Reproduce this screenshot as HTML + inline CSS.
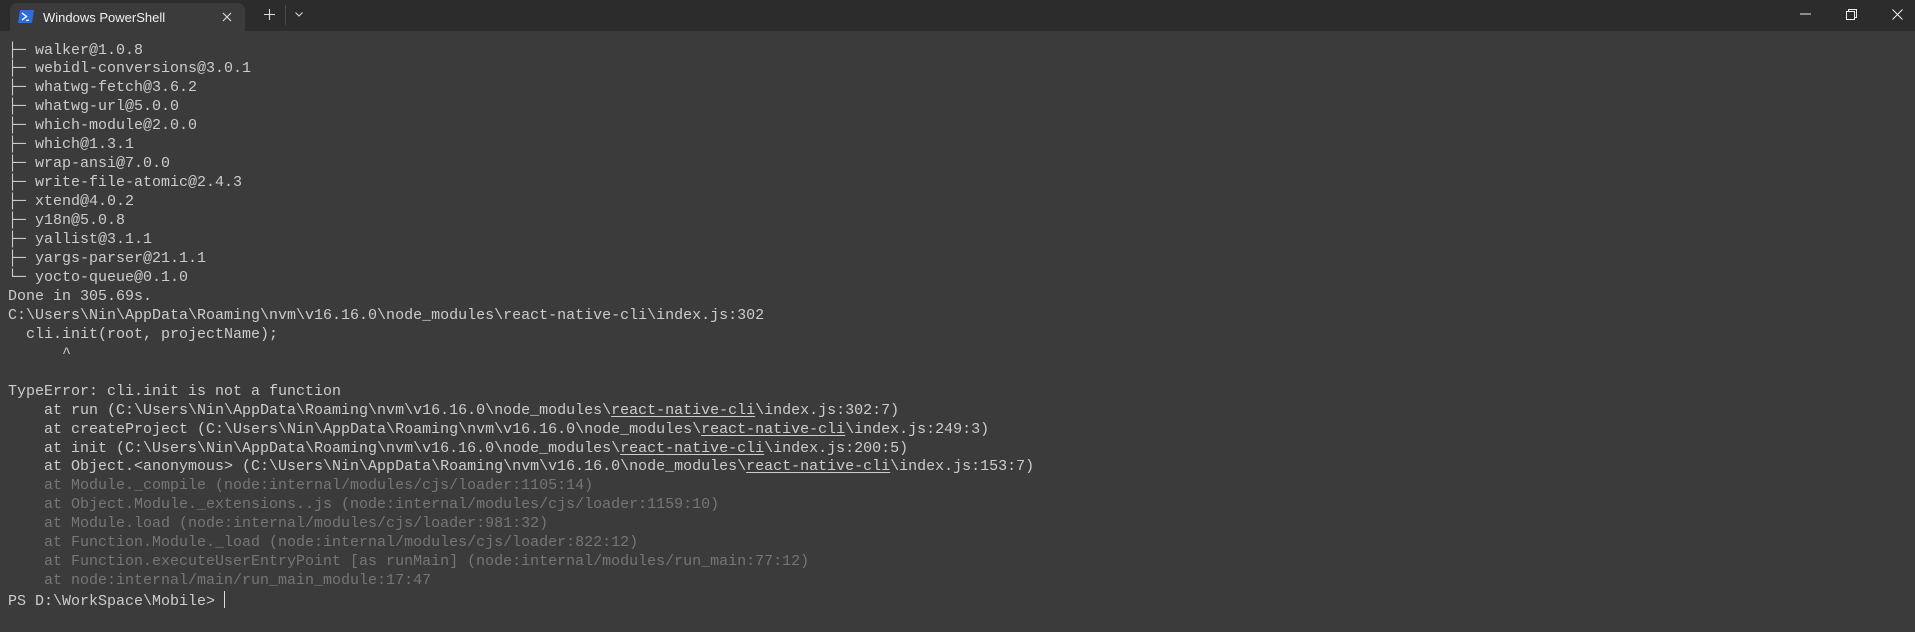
<!DOCTYPE html>
<html><head><meta charset="utf-8"><style>
*{margin:0;padding:0;box-sizing:border-box}
body{width:1915px;height:632px;background:#3b3b3b;overflow:hidden;position:relative;font-family:"Liberation Sans",sans-serif}
.bar{position:absolute;left:0;top:0;width:1915px;height:31px;background:#2c2c2c}
.tab{position:absolute;left:10px;top:3px;width:235px;height:28px;background:#3b3b3b;border-radius:7px 7px 0 0}
.title{position:absolute;left:33px;top:7px;font-size:13px;color:#f0f0f0}
.term{position:absolute;left:8px;top:41.5px;font-family:"Liberation Mono",monospace;font-size:15px;line-height:18.95px;color:#cccccc;white-space:pre}
.d{color:#767676}
u{text-decoration:underline;text-underline-offset:2px}
.cur{display:inline-block;width:1px;height:17px;background:#ddd;vertical-align:-3px}
</style></head><body>
<div class="bar">
<div class="tab">
<svg style="position:absolute;left:8px;top:7px" width="16" height="13" viewBox="0 0 16 13"><path d="M2 0H16L14 13H0Z" fill="#2f6ed8"/><path d="M4 3L8.5 6.5L4 10" stroke="#fff" stroke-width="1.4" fill="none"/><path d="M8 10.3H11" stroke="#fff" stroke-width="1.2"/></svg>
<div class="title">Windows PowerShell</div>
<svg style="position:absolute;left:212px;top:9px" width="10" height="10" viewBox="0 0 10 10"><path d="M1 1L9 9M9 1L1 9" stroke="#ddd" stroke-width="1.1"/></svg>
</div>
<svg style="position:absolute;left:264px;top:9px" width="11" height="11" viewBox="0 0 11 11"><path d="M5.5 0V11M0 5.5H11" stroke="#ddd" stroke-width="1.1"/></svg>
<div style="position:absolute;left:285px;top:5px;width:1px;height:20px;background:#4a4a4a"></div>
<svg style="position:absolute;left:295px;top:12px" width="8" height="5" viewBox="0 0 8 5"><path d="M0.5 0.5L4 4L7.5 0.5" stroke="#ddd" stroke-width="1" fill="none"/></svg>
<svg style="position:absolute;left:1800px;top:13px" width="11" height="2"><path d="M0 1H11" stroke="#eee" stroke-width="1"/></svg>
<svg style="position:absolute;left:1846px;top:9px" width="11" height="11" viewBox="0 0 11 11"><rect x="0.5" y="2.5" width="8" height="8" stroke="#eee" fill="none"/><path d="M2.5 2.5V0.5H10.5V8.5H8.5" stroke="#eee" fill="none"/></svg>
<svg style="position:absolute;left:1892px;top:9px" width="11" height="11" viewBox="0 0 11 11"><path d="M0.5 0.5L10.5 10.5M10.5 0.5L0.5 10.5" stroke="#eee" stroke-width="1"/></svg>
</div>
<div class="term">├─ walker@1.0.8
├─ webidl-conversions@3.0.1
├─ whatwg-fetch@3.6.2
├─ whatwg-url@5.0.0
├─ which-module@2.0.0
├─ which@1.3.1
├─ wrap-ansi@7.0.0
├─ write-file-atomic@2.4.3
├─ xtend@4.0.2
├─ y18n@5.0.8
├─ yallist@3.1.1
├─ yargs-parser@21.1.1
└─ yocto-queue@0.1.0
Done in 305.69s.
C:\Users\Nin\AppData\Roaming\nvm\v16.16.0\node_modules\react-native-cli\index.js:302
  cli.init(root, projectName);
      ^

TypeError: cli.init is not a function
    at run (C:\Users\Nin\AppData\Roaming\nvm\v16.16.0\node_modules\<u>react-native-cli</u>\index.js:302:7)
    at createProject (C:\Users\Nin\AppData\Roaming\nvm\v16.16.0\node_modules\<u>react-native-cli</u>\index.js:249:3)
    at init (C:\Users\Nin\AppData\Roaming\nvm\v16.16.0\node_modules\<u>react-native-cli</u>\index.js:200:5)
    at Object.&lt;anonymous&gt; (C:\Users\Nin\AppData\Roaming\nvm\v16.16.0\node_modules\<u>react-native-cli</u>\index.js:153:7)
<span class="d">    at Module._compile (node:internal/modules/cjs/loader:1105:14)
    at Object.Module._extensions..js (node:internal/modules/cjs/loader:1159:10)
    at Module.load (node:internal/modules/cjs/loader:981:32)
    at Function.Module._load (node:internal/modules/cjs/loader:822:12)
    at Function.executeUserEntryPoint [as runMain] (node:internal/modules/run_main:77:12)
    at node:internal/main/run_main_module:17:47</span>
PS D:\WorkSpace\Mobile&gt; <span class="cur"></span></div>
</body></html>
